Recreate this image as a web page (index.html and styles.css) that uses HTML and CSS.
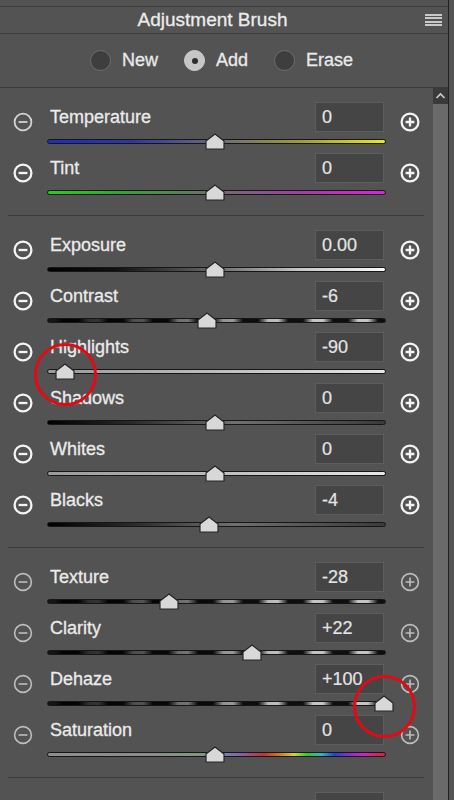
FILE: index.html
```html
<!DOCTYPE html>
<html>
<head>
<meta charset="utf-8">
<link rel="stylesheet" href="styles.css">
</head>
<body>
<div class="app">
  <div class="panel">
    <div class="topgap"></div>
    <div class="header">
      <div class="title">Adjustment Brush</div>
      <div class="menu"><i></i><i></i><i></i><i></i></div>
    </div>
    <div class="modes">
      <div class="mode"><span class="radio"></span><span>New</span></div>
      <div class="mode"><span class="radio on"></span><span>Add</span></div>
      <div class="mode"><span class="radio"></span><span>Erase</span></div>
    </div>
    <div class="body">
      <div class="content">
        <section class="group">
          <div class="row dimminus">
            <svg class="minus" viewBox="0 0 20 20"><circle cx="10" cy="10" r="8.4"/><path d="M5.6 10h8.8"/></svg>
            <div class="top"><span class="label">Temperature</span><span class="value">0</span></div>
            <div class="slider"><div class="track t-temp"></div><div class="thumb" style="--x:168px"><svg viewBox="0 0 20 17"><path d="M10 1L19 8V16H1V8Z"/></svg></div></div>
            <svg class="plus" viewBox="0 0 20 20"><circle cx="10" cy="10" r="8.4"/><path d="M5.6 10h8.8M10 5.6v8.8"/></svg>
          </div>
          <div class="row">
            <svg class="minus" viewBox="0 0 20 20"><circle cx="10" cy="10" r="8.4"/><path d="M5.6 10h8.8"/></svg>
            <div class="top"><span class="label">Tint</span><span class="value">0</span></div>
            <div class="slider"><div class="track t-tint"></div><div class="thumb" style="--x:168px"><svg viewBox="0 0 20 17"><path d="M10 1L19 8V16H1V8Z"/></svg></div></div>
            <svg class="plus" viewBox="0 0 20 20"><circle cx="10" cy="10" r="8.4"/><path d="M5.6 10h8.8M10 5.6v8.8"/></svg>
          </div>
        </section>
        <section class="group">
          <div class="row">
            <svg class="minus" viewBox="0 0 20 20"><circle cx="10" cy="10" r="8.4"/><path d="M5.6 10h8.8"/></svg>
            <div class="top"><span class="label">Exposure</span><span class="value">0.00</span></div>
            <div class="slider"><div class="track t-exposure"></div><div class="thumb" style="--x:168px"><svg viewBox="0 0 20 17"><path d="M10 1L19 8V16H1V8Z"/></svg></div></div>
            <svg class="plus" viewBox="0 0 20 20"><circle cx="10" cy="10" r="8.4"/><path d="M5.6 10h8.8M10 5.6v8.8"/></svg>
          </div>
          <div class="row">
            <svg class="minus" viewBox="0 0 20 20"><circle cx="10" cy="10" r="8.4"/><path d="M5.6 10h8.8"/></svg>
            <div class="top"><span class="label">Contrast</span><span class="value">-6</span></div>
            <div class="slider"><div class="track t-dash"></div><div class="thumb" style="--x:160px"><svg viewBox="0 0 20 17"><path d="M10 1L19 8V16H1V8Z"/></svg></div></div>
            <svg class="plus" viewBox="0 0 20 20"><circle cx="10" cy="10" r="8.4"/><path d="M5.6 10h8.8M10 5.6v8.8"/></svg>
          </div>
          <div class="row">
            <svg class="minus" viewBox="0 0 20 20"><circle cx="10" cy="10" r="8.4"/><path d="M5.6 10h8.8"/></svg>
            <div class="top"><span class="label">Highlights</span><span class="value">-90</span></div>
            <div class="slider"><div class="track t-light"></div><div class="thumb" style="--x:18px"><svg viewBox="0 0 20 17"><path d="M10 1L19 8V16H1V8Z"/></svg><span class="ring"></span></div></div>
            <svg class="plus" viewBox="0 0 20 20"><circle cx="10" cy="10" r="8.4"/><path d="M5.6 10h8.8M10 5.6v8.8"/></svg>
          </div>
          <div class="row">
            <svg class="minus" viewBox="0 0 20 20"><circle cx="10" cy="10" r="8.4"/><path d="M5.6 10h8.8"/></svg>
            <div class="top"><span class="label">Shadows</span><span class="value">0</span></div>
            <div class="slider"><div class="track t-dark"></div><div class="thumb" style="--x:168px"><svg viewBox="0 0 20 17"><path d="M10 1L19 8V16H1V8Z"/></svg></div></div>
            <svg class="plus" viewBox="0 0 20 20"><circle cx="10" cy="10" r="8.4"/><path d="M5.6 10h8.8M10 5.6v8.8"/></svg>
          </div>
          <div class="row">
            <svg class="minus" viewBox="0 0 20 20"><circle cx="10" cy="10" r="8.4"/><path d="M5.6 10h8.8"/></svg>
            <div class="top"><span class="label">Whites</span><span class="value">0</span></div>
            <div class="slider"><div class="track t-light"></div><div class="thumb" style="--x:168px"><svg viewBox="0 0 20 17"><path d="M10 1L19 8V16H1V8Z"/></svg></div></div>
            <svg class="plus" viewBox="0 0 20 20"><circle cx="10" cy="10" r="8.4"/><path d="M5.6 10h8.8M10 5.6v8.8"/></svg>
          </div>
          <div class="row">
            <svg class="minus" viewBox="0 0 20 20"><circle cx="10" cy="10" r="8.4"/><path d="M5.6 10h8.8"/></svg>
            <div class="top"><span class="label">Blacks</span><span class="value">-4</span></div>
            <div class="slider"><div class="track t-dark"></div><div class="thumb" style="--x:162px"><svg viewBox="0 0 20 17"><path d="M10 1L19 8V16H1V8Z"/></svg></div></div>
            <svg class="plus" viewBox="0 0 20 20"><circle cx="10" cy="10" r="8.4"/><path d="M5.6 10h8.8M10 5.6v8.8"/></svg>
          </div>
        </section>
        <section class="group dim">
          <div class="row">
            <svg class="minus" viewBox="0 0 20 20"><circle cx="10" cy="10" r="8.4"/><path d="M5.6 10h8.8"/></svg>
            <div class="top"><span class="label">Texture</span><span class="value">-28</span></div>
            <div class="slider"><div class="track t-dash"></div><div class="thumb" style="--x:122px"><svg viewBox="0 0 20 17"><path d="M10 1L19 8V16H1V8Z"/></svg></div></div>
            <svg class="plus" viewBox="0 0 20 20"><circle cx="10" cy="10" r="8.4"/><path d="M5.6 10h8.8M10 5.6v8.8"/></svg>
          </div>
          <div class="row">
            <svg class="minus" viewBox="0 0 20 20"><circle cx="10" cy="10" r="8.4"/><path d="M5.6 10h8.8"/></svg>
            <div class="top"><span class="label">Clarity</span><span class="value">+22</span></div>
            <div class="slider"><div class="track t-dash"></div><div class="thumb" style="--x:205px"><svg viewBox="0 0 20 17"><path d="M10 1L19 8V16H1V8Z"/></svg></div></div>
            <svg class="plus" viewBox="0 0 20 20"><circle cx="10" cy="10" r="8.4"/><path d="M5.6 10h8.8M10 5.6v8.8"/></svg>
          </div>
          <div class="row">
            <svg class="minus" viewBox="0 0 20 20"><circle cx="10" cy="10" r="8.4"/><path d="M5.6 10h8.8"/></svg>
            <div class="top"><span class="label">Dehaze</span><span class="value">+100</span></div>
            <div class="slider"><div class="track t-dash"></div><div class="thumb" style="--x:337px"><svg viewBox="0 0 20 17"><path d="M10 1L19 8V16H1V8Z"/></svg><span class="ring"></span></div></div>
            <svg class="plus" viewBox="0 0 20 20"><circle cx="10" cy="10" r="8.4"/><path d="M5.6 10h8.8M10 5.6v8.8"/></svg>
          </div>
          <div class="row">
            <svg class="minus" viewBox="0 0 20 20"><circle cx="10" cy="10" r="8.4"/><path d="M5.6 10h8.8"/></svg>
            <div class="top"><span class="label">Saturation</span><span class="value">0</span></div>
            <div class="slider"><div class="track t-sat"></div><div class="thumb" style="--x:168px"><svg viewBox="0 0 20 17"><path d="M10 1L19 8V16H1V8Z"/></svg></div></div>
            <svg class="plus" viewBox="0 0 20 20"><circle cx="10" cy="10" r="8.4"/><path d="M5.6 10h8.8M10 5.6v8.8"/></svg>
          </div>
        </section>
        <section class="group">
          <div class="row">
            <div class="top"><span class="label"></span><span class="value"></span></div>
          </div>
        </section>
      </div>
      <div class="scrollbar">
        <div class="up"><svg viewBox="0 0 15 16"><path d="M3.5 10L7.5 6L11.5 10"/></svg></div>
        <div class="rail"></div>
      </div>
    </div>
  </div>
  <div class="edge"></div>
</div>
</body>
</html>
```
FILE: styles.css
```css
html, body {
  margin: 0;
  padding: 0;
}
body {
  width: 454px;
  height: 800px;
  overflow: hidden;
  background: #535353;
  font-family: "Liberation Sans", Arial, sans-serif;
  color: #e8e8e8;
}
.app {
  display: flex;
  height: 800px;
  overflow: hidden;
}
.panel {
  width: 448px;
  display: flex;
  flex-direction: column;
  background: #535353;
}
.edge {
  width: 1px;
  background: #1f1f1f;
}
.topgap {
  height: 6px;
}
.header {
  height: 26px;
  border-top: 1px solid #3c3c3c;
  border-bottom: 1px solid #3c3c3c;
  display: flex;
  align-items: center;
}
.title {
  width: 425px;
  text-align: center;
  font-size: 19px;
  color: #ececec;
  line-height: 26px;
  -webkit-text-stroke: 0.3px #ececec;
}
.menu {
  width: 17px;
  display: flex;
  flex-direction: column;
  gap: 1.3px;
}
.menu i {
  display: block;
  height: 2px;
  background: #c9c9c9;
}
.modes {
  height: 53px;
  border-bottom: 1px solid #3c3c3c;
  display: flex;
  align-items: center;
  padding-left: 90px;
  gap: 26px;
  font-size: 18px;
  color: #eaeaea;
  -webkit-text-stroke: 0.3px #eaeaea;
}
.mode {
  display: flex;
  align-items: center;
  gap: 11px;
}
.radio {
  width: 21px;
  height: 21px;
  box-sizing: border-box;
  border-radius: 50%;
  background: #3e3e3e;
  border: 1.5px solid #6f6f6f;
  display: flex;
  align-items: center;
  justify-content: center;
}
.radio.on {
  background: #c6c6c6;
  border-color: #d2d2d2;
}
.radio.on::after {
  content: "";
  width: 6px;
  height: 6px;
  border-radius: 50%;
  background: #2e2e2e;
}
.body {
  flex: 1;
  display: flex;
  min-height: 0;
}
.content {
  width: 433px;
}
.scrollbar {
  width: 15px;
  display: flex;
  flex-direction: column;
}
.up {
  height: 16px;
  background: #3a3a3a;
}
.up svg {
  width: 15px;
  height: 16px;
  display: block;
  fill: none;
  stroke: #cfcfcf;
  stroke-width: 1.6;
}
.rail {
  flex: 1;
  background: #6a6a6a;
}
.group {
  margin: 0 9px 0 8px;
  padding: 14px 0 11px;
  border-bottom: 1px solid #3b3b3b;
}
.row {
  height: 51px;
  display: grid;
  grid-template-columns: 39px 339px 1fr;
  grid-template-rows: 30px 21px;
}
.minus, .plus {
  grid-row: 1 / 3;
  width: 20px;
  height: 20px;
  margin-top: 10px;
  fill: none;
  stroke: #f4f4f4;
  stroke-width: 2.3;
}
.minus {
  grid-column: 1;
  margin-left: 5px;
}
.plus {
  grid-column: 3;
  margin-left: 14px;
}
.dimminus .minus {
  stroke: #d4d4d4;
  stroke-width: 1.8;
}
.dim .minus, .dim .plus {
  stroke: #bdbdbd;
  stroke-width: 1.6;
}
.top {
  grid-column: 2;
  grid-row: 1;
  display: flex;
  align-items: center;
  justify-content: space-between;
}
.label {
  padding-left: 3px;
  font-size: 18px;
  color: #ebebeb;
  -webkit-text-stroke: 0.3px #ebebeb;
}
.value {
  width: 69px;
  height: 30px;
  box-sizing: border-box;
  margin-right: 2px;
  background: #454545;
  border: 1px solid #5d5d5d;
  padding-left: 6px;
  font-size: 18px;
  line-height: 28px;
  color: #e4e4e4;
  -webkit-text-stroke: 0.2px #e4e4e4;
}
.slider {
  grid-column: 2;
  grid-row: 2;
  position: relative;
}
.track {
  margin-top: 7px;
  height: 5px;
  box-sizing: border-box;
  border: 1px solid #161616;
  border-radius: 3px;
}
.t-temp {
  background: linear-gradient(90deg, #1d2cc4 0%, #2c36a8 25%, #6a6a78 50%, #9c9c3a 75%, #eaea1c 100%);
}
.t-tint {
  background: linear-gradient(90deg, #22d022 0%, #3a9a3a 25%, #6e6e6e 50%, #a040a0 75%, #e020e0 100%);
}
.t-exposure {
  background: linear-gradient(90deg, #000 0%, #111 20%, #6a6a6a 50%, #c8c8c8 75%, #fafafa 100%);
}
.t-light {
  background: linear-gradient(90deg, #9a9a9a 0%, #bdbdbd 50%, #e6e6e6 100%);
}
.t-dark {
  background: linear-gradient(90deg, #000 0%, #2a2a2a 25%, #707070 55%, #3a3a3a 100%);
}
.t-dash {
  background:
    linear-gradient(90deg, rgba(0,0,0,0.9) 0%, rgba(0,0,0,0.5) 35%, rgba(0,0,0,0) 70%),
    repeating-linear-gradient(90deg, #c4c4c4 0px, #c4c4c4 5px, #0e0e0e 15px, #0e0e0e 30px, #c4c4c4 40px, #c4c4c4 45px);
}
.t-sat {
  background: linear-gradient(90deg, #8e8e8e 0%, #8c8c8c 30%, #7c9a7c 45%, #7080a8 53%, #8a5aa2 58%, #c03434 64%, #d27e22 69%, #d4d422 73%, #34c434 77%, #22c0c0 81%, #2444d2 85%, #7e32d2 89%, #d024c4 94%, #d42232 100%);
}
.thumb {
  position: absolute;
  top: 1px;
  left: calc(var(--x) - 10px);
  width: 20px;
  height: 17px;
}
.thumb svg {
  display: block;
  width: 20px;
  height: 17px;
  fill: #d8d8d8;
  stroke: #262626;
  stroke-width: 1.2;
  stroke-linejoin: round;
}
.ring {
  position: absolute;
  left: 50%;
  top: 50%;
  width: 63px;
  height: 63px;
  margin: -29px 0 0 -31.5px;
  box-sizing: border-box;
  border: 3px solid #e20a14;
  border-radius: 50%;
}
```
